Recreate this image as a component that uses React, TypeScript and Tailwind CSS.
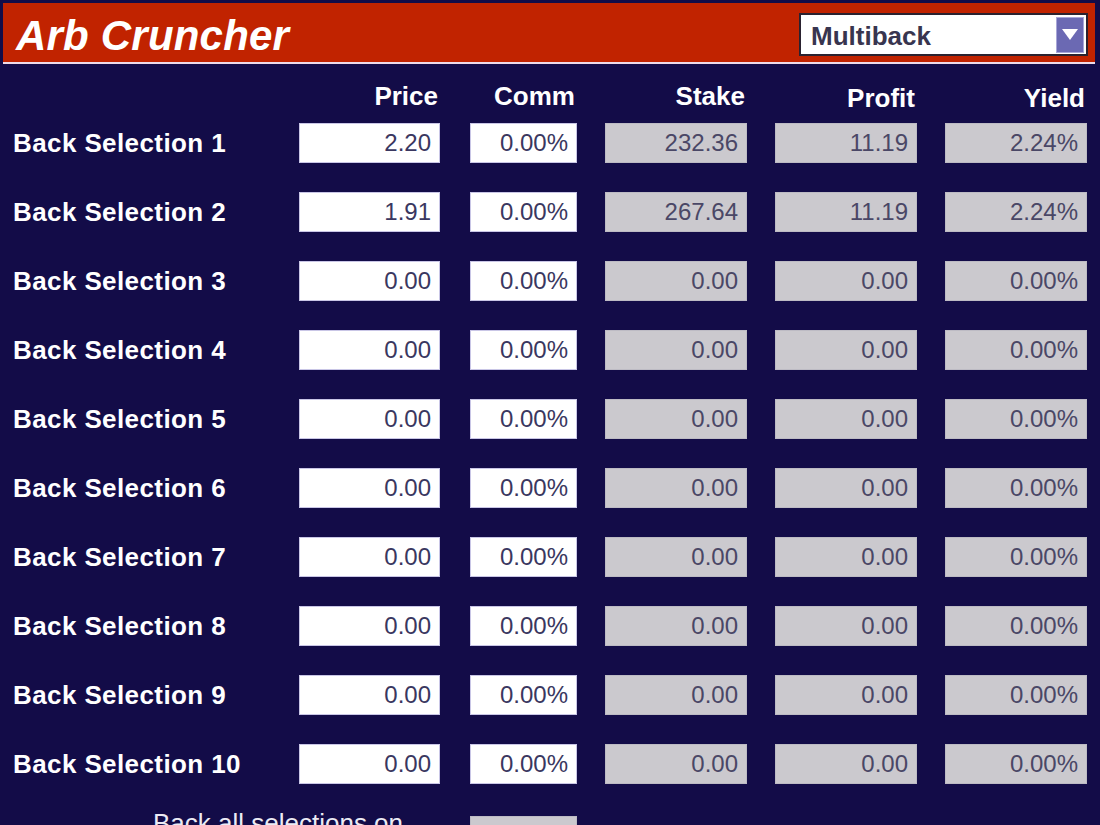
import React from "react";

const rows = [
  { price: "2.20", comm: "0.00%", stake: "232.36", profit: "11.19", yield: "2.24%" },
  { price: "1.91", comm: "0.00%", stake: "267.64", profit: "11.19", yield: "2.24%" },
  ...Array.from({ length: 8 }, () => ({
    price: "0.00",
    comm: "0.00%",
    stake: "0.00",
    profit: "0.00",
    yield: "0.00%",
  })),
];

function Field({ value, width, grey }: { value: string; width: string; grey?: boolean }) {
  return (
    <div
      className={`${width} h-[40px] flex items-center justify-end pr-[8px] text-[24px] leading-none ${
        grey
          ? "bg-[#cbc9ce] border border-[#bdbbc4] text-[#4a4766]"
          : "bg-white border border-[#c9c6e6] text-[#3a3760]"
      }`}
    >
      {value}
    </div>
  );
}

export default function App() {
  return (
    <div
      className="w-[1100px] h-[825px] overflow-hidden bg-[#130c48] pt-[3px] pl-[3px] pr-[5px]"
      style={{ fontFamily: '"Liberation Sans", Arial, sans-serif' }}
    >
      {/* Title bar */}
      <div className="h-[61px] bg-[#c12300] border-b-[2px] border-[#eedcea] flex items-center justify-between pl-[13px] pr-[7px]">
        <h1 className="text-white font-bold italic text-[42px] leading-none pt-[6px] tracking-[0.2px]">Arb Cruncher</h1>
        <div className="w-[289px] h-[43px] mt-[4px] bg-white border-[2px] border-[#2a2230] flex items-center justify-between pl-[10px] pr-[2px]">
          <span className="text-[26px] font-bold text-[#38354f] leading-none pt-[2px]">Multiback</span>
          <div className="w-[28px] h-[36px] bg-[#6b69b3] border border-[#a8a6d8] flex items-center justify-center">
            <svg width="18" height="13" viewBox="0 0 18 13">
              <path d="M1 1 L17 1 L9 12 Z" fill="#ffffff" />
            </svg>
          </div>
        </div>
      </div>

      {/* Column headings */}
      <div className="flex h-[59px] pt-[17px] text-white font-bold text-[26px] leading-[30px] -ml-[3px]">
        <div className="w-[299px]" />
        <div className="w-[141px] text-right pr-[2px]">Price</div>
        <div className="w-[107px] ml-[30px] text-right pr-[2px]">Comm</div>
        <div className="w-[142px] ml-[28px] text-right pr-[2px]">Stake</div>
        <div className="w-[142px] ml-[28px] text-right pr-[2px] pt-[2px]">Profit</div>
        <div className="w-[142px] ml-[28px] text-right pr-[2px] pt-[2px]">Yield</div>
      </div>

      {/* Selection rows */}
      <div className="flex flex-col gap-[29px] -ml-[3px]">
        {rows.map((r, i) => (
          <div key={i} className="flex items-center">
            <div className="w-[299px] pl-[13px] text-white font-bold text-[26px] leading-none tracking-[0.4px]">
              Back Selection {i + 1}
            </div>
            <Field value={r.price} width="w-[141px]" />
            <div className="ml-[30px]">
              <Field value={r.comm} width="w-[107px]" />
            </div>
            <div className="ml-[28px]">
              <Field value={r.stake} width="w-[142px]" grey />
            </div>
            <div className="ml-[28px]">
              <Field value={r.profit} width="w-[142px]" grey />
            </div>
            <div className="ml-[28px]">
              <Field value={r.yield} width="w-[142px]" grey />
            </div>
          </div>
        ))}

        <div className="flex items-start">
          <div className="w-[440px] pl-[153px] -mt-[5px] text-[#ecebf4] text-[26px] leading-[30px]">
            Back all selections on
          </div>
          <div className="ml-[30px] mt-[3px] w-[107px] h-[40px] bg-[#cbc9ce] border border-[#bdbbc4]" />
        </div>
      </div>
    </div>
  );
}
